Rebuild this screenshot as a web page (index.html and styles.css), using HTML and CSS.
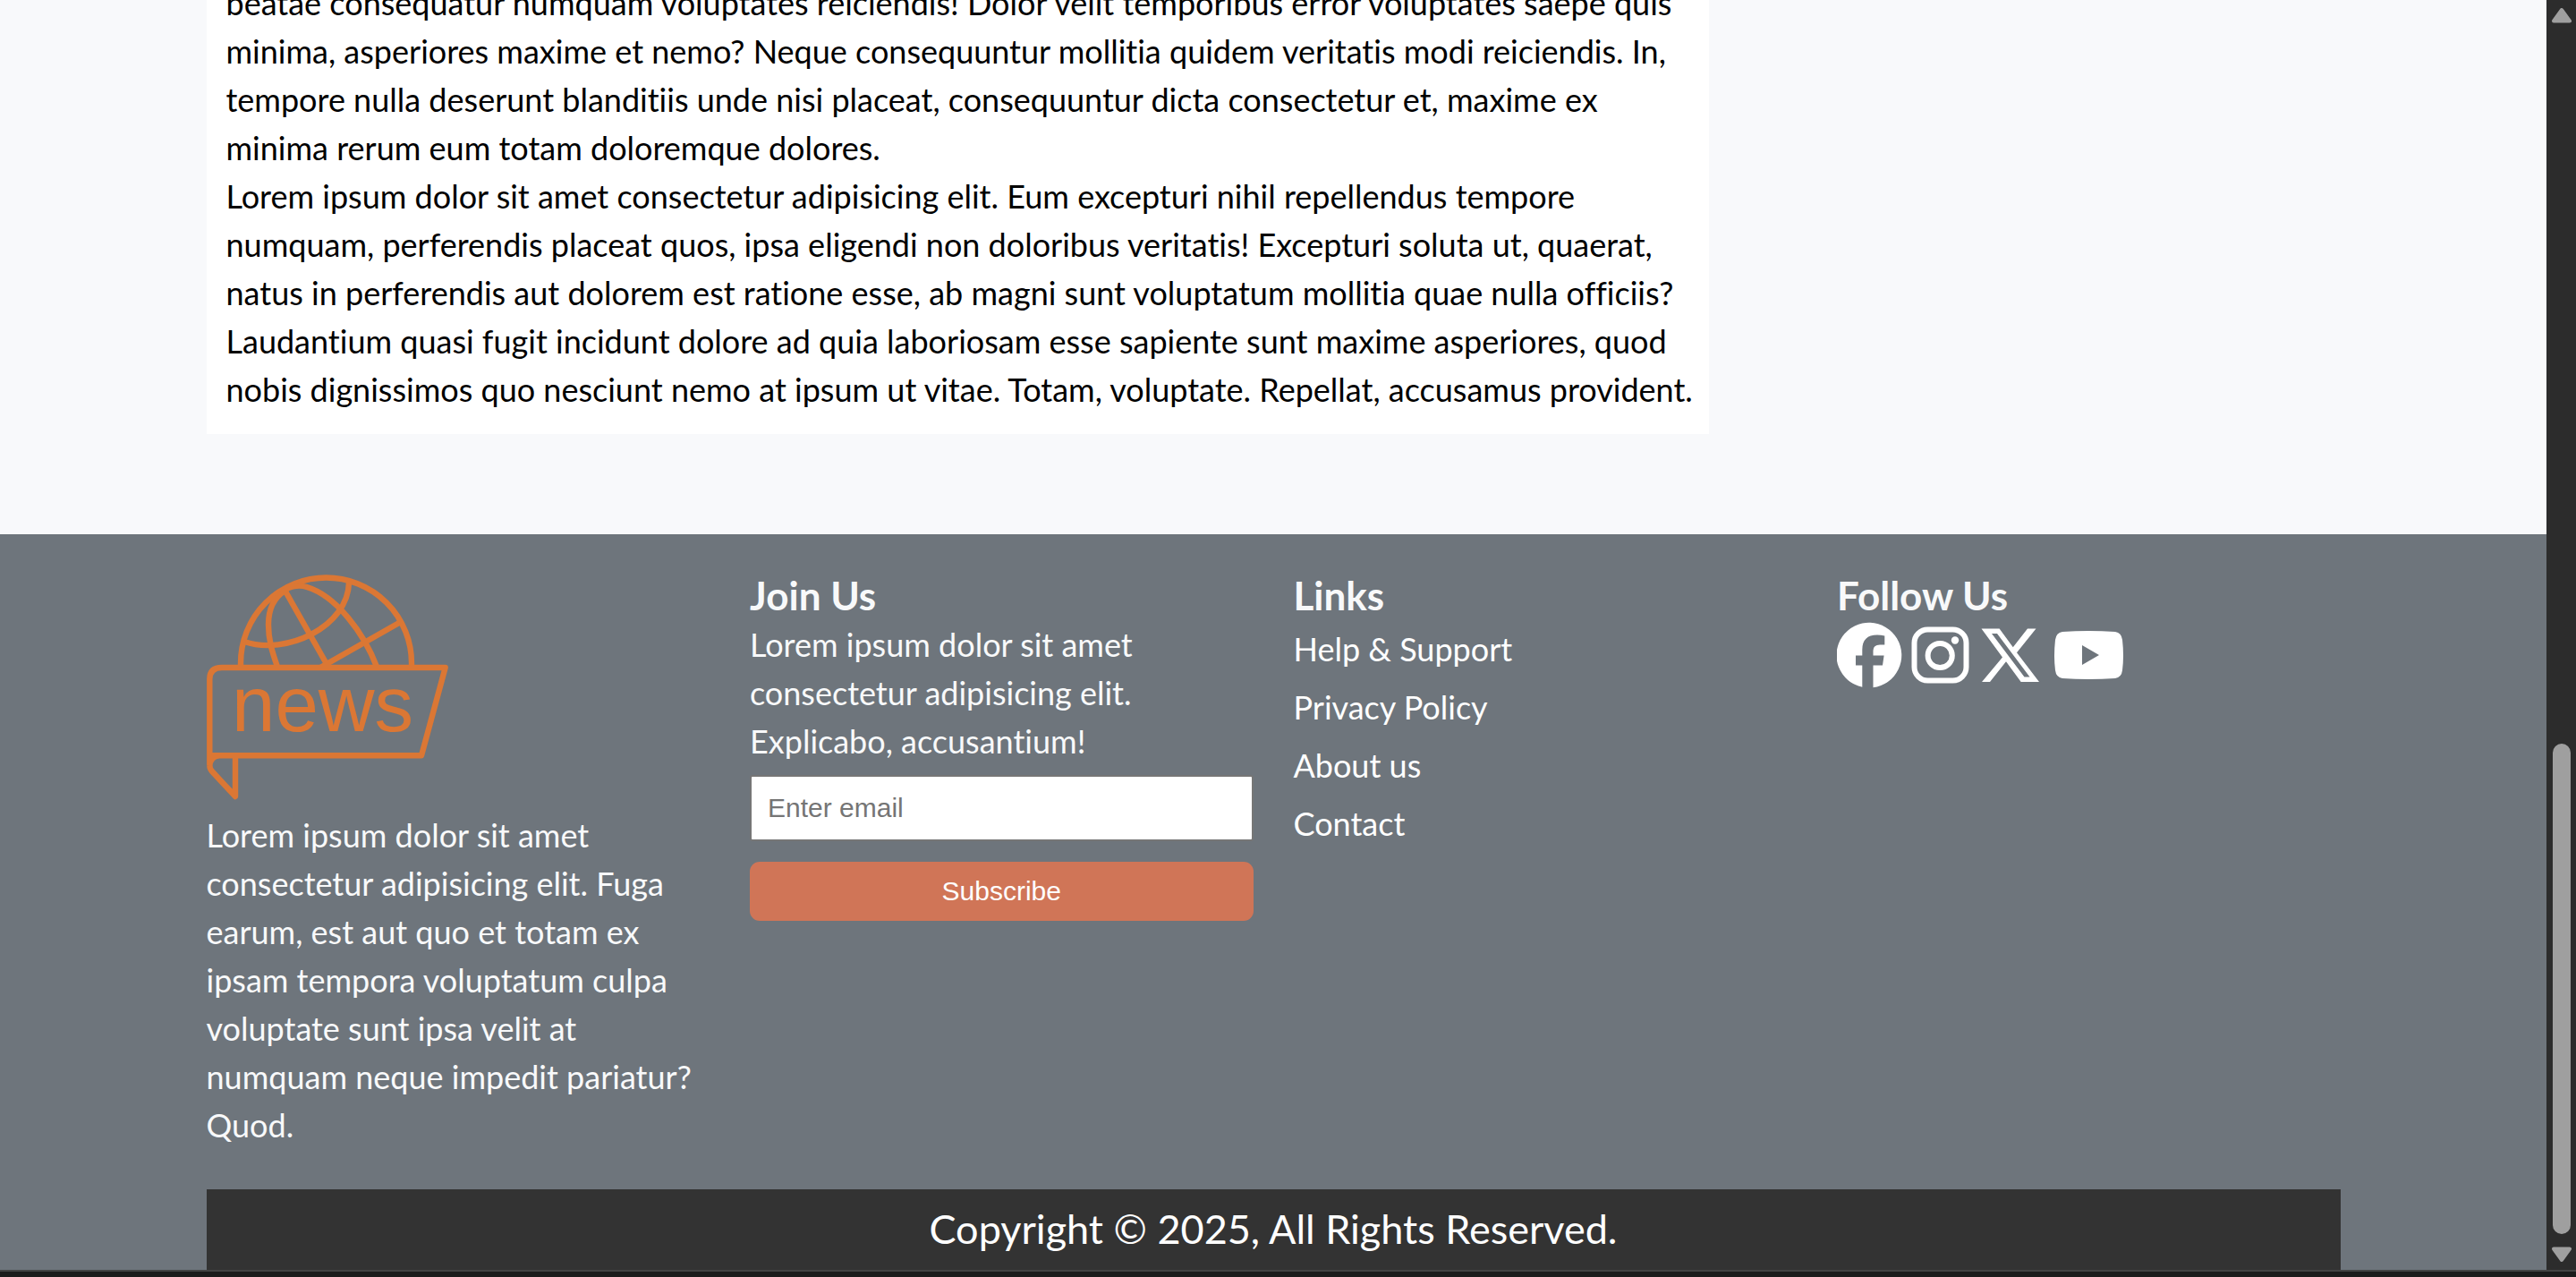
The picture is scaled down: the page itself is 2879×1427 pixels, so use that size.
FILE: index.html
```html
<!DOCTYPE html>
<html lang="en">
<head>
<meta charset="utf-8">
<meta name="viewport" content="width=device-width, initial-scale=1">
<title>News</title>
<link rel="stylesheet" href="styles.css">
</head>
<body>
<div class="window">
  <div class="page">
    <main class="container">
      <article class="card">
        <p>beatae consequatur numquam voluptates reiciendis! Dolor velit temporibus error voluptates saepe quis minima, asperiores maxime et nemo? Neque consequuntur mollitia quidem veritatis modi reiciendis. In, tempore nulla deserunt blanditiis unde nisi placeat, consequuntur dicta consectetur et, maxime ex minima rerum eum totam doloremque dolores.</p>
        <p>Lorem ipsum dolor sit amet consectetur adipisicing elit. Eum excepturi nihil repellendus tempore numquam, perferendis placeat quos, ipsa eligendi non doloribus veritatis! Excepturi soluta ut, quaerat, natus in perferendis aut dolorem est ratione esse, ab magni sunt voluptatum mollitia quae nulla officiis? Laudantium quasi fugit incidunt dolore ad quia laboriosam esse sapiente sunt maxime asperiores, quod nobis dignissimos quo nesciunt nemo at ipsum ut vitae. Totam, voluptate. Repellat, accusamus provident.</p>
      </article>
    </main>
    <footer class="footer">
      <div class="container columns">
        <section>
          <svg class="logo" viewBox="0 0 270 252" role="img" aria-label="News">
            <g fill="none" stroke="#db7734" stroke-width="6.4" stroke-linejoin="round">
              <path d="M38 103V99A95.4 95.4 0 0 1 229 99V103"/>
              <path d="M87 17L134 100M127 104L215 54"/>
              <path d="M42 75C89 91 158 58 159 9"/>
              <path d="M88 18C76 25 69 36 69 56C69 73 73 86 79 103"/>
              <path d="M86 19C92 13 103 11 112 14C145 24 176 66 190 103"/>
              <path d="M3.300 202.300V117Q3.300 104 17 104H266.700L240 202.300H3.300V213Q3.300 217 6 220L32 248V202.300M3.300 214Q4 203 14 202.300"/>
            </g>
            <text class="logo-text" x="28" y="175">news</text>
          </svg>
          <p>Lorem ipsum dolor sit amet consectetur adipisicing elit. Fuga earum, est aut quo et totam ex ipsam tempora voluptatum culpa voluptate sunt ipsa velit at numquam neque impedit pariatur? Quod.</p>
        </section>
        <section>
          <h3>Join Us</h3>
          <p>Lorem ipsum dolor sit amet consectetur adipisicing elit. Explicabo, accusantium!</p>
          <form class="join">
            <input type="email" placeholder="Enter email" aria-label="Enter email">
            <button type="button">Subscribe</button>
          </form>
        </section>
        <section>
          <h3>Links</h3>
          <ul class="links">
            <li><a href="#">Help &amp; Support</a></li>
            <li><a href="#">Privacy Policy</a></li>
            <li><a href="#">About us</a></li>
            <li><a href="#">Contact</a></li>
          </ul>
        </section>
        <section>
          <h3>Follow Us</h3>
          <div class="social">
            <a href="#" aria-label="Facebook"><svg width="76" height="79" viewBox="0 0 76 79"><path d="M28.300 74.800A36.400 36.400 0 1 1 40.500 75.300V50.500H51L52.600 39.500H40.500V34Q40.500 27.500 48 27.500H53.300V17.500Q49 16.500 45 16.500Q28.300 16.500 28.300 33V39.500H21V50.500H28.300Z"/></svg></a>
            <a href="#" aria-label="Instagram"><svg width="79" height="79" viewBox="0 0 79 79"><g fill="none" stroke="#fff" stroke-width="6"><rect x="10.500" y="10.500" width="58" height="57" rx="15"/><circle cx="39.200" cy="39.500" r="13.600"/></g><circle cx="56" cy="22.500" r="4.200"/></svg></a>
            <a href="#" aria-label="X"><svg width="79" height="79" viewBox="0 0 79 79"><path fill-rule="evenodd" d="M6.500 9.500H26.600L41.800 30.300L58 9.500H67.500L46 36.200L71 69H50.700L34 46.200L16 69H7L30 41.500ZM18 15L54.500 63.500H60.500L24 15Z"/></svg></a>
            <a href="#" aria-label="YouTube"><svg width="94" height="79" viewBox="0 0 94 79"><path fill-rule="evenodd" d="M18 13Q47 11 77 13Q84 14 85 22Q87 40 85 56Q84 64 77 65Q47 67 18 65Q11 64 10 56Q8 40 10 22Q11 14 18 13ZM40 28V50L59 39Z"/></svg></a>
          </div>
        </section>
      </div>
      <div class="container copyright">Copyright © 2025, All Rights Reserved.</div>
    </footer>
  </div>
  <div class="scrollbar" aria-hidden="true">
    <svg width="22" height="17" viewBox="0 0 22 17"><path d="M11 2L20 14.500H2Z"/></svg>
    <div class="track"><div class="thumb"></div></div>
    <svg width="22" height="17" viewBox="0 0 22 17"><path d="M11 15L20 2.500H2Z"/></svg>
  </div>
</div>
<div class="edge"></div>
</body>
</html>
```
FILE: styles.css
```css
* {
  box-sizing: border-box;
  margin: 0;
  padding: 0;
}

body {
  display: flex;
  flex-direction: column;
  height: 100vh;
  overflow: hidden;
  font-family: Lato, sans-serif;
  font-size: 36px;
  font-variant-ligatures: none;
  line-height: 54px;
  color: #000;
  background: #f8f9fb;
}

.window {
  display: flex;
  flex: 1;
  min-height: 0;
}

/* The page is scrolled to its end, so content hangs from the bottom edge. */
.page {
  display: flex;
  flex: 1;
  flex-direction: column;
  justify-content: flex-end;
  min-width: 0;
  overflow: hidden;
}

.container {
  width: 100%;
  max-width: 2385px;
  margin: 0 auto;
}

main.container {
  padding-bottom: 112px;
}

.card {
  width: 70.4%;
  padding: 22px 10px 23px 22px;
  background: #fff;
}

.footer {
  flex-shrink: 0;
  padding-top: 45px;
  color: #f8f9fa;
  background: #6e757c;
}

.columns {
  display: grid;
  grid-template-columns: repeat(4, 1fr);
  gap: 45px;
  padding-bottom: 45px;
}

.logo {
  display: block;
  width: 270px;
  height: 252px;
  margin-bottom: 12px;
}

.logo-text {
  font-family: "Liberation Sans", Arial, sans-serif;
  font-size: 87px;
  fill: #db7734;
}

h3 {
  padding-bottom: 4px;
  font-size: 44px;
  font-weight: 700;
  line-height: 47px;
}

.join {
  display: flex;
  flex-direction: column;
  gap: 23px;
  margin-top: 11px;
}

.join input,
.join button {
  width: 100%;
  font-family: "Liberation Sans", Arial, sans-serif;
  font-size: 30px;
}

.join input {
  height: 74px;
  padding: 0 18px;
  border: 2px solid #767676;
  border-radius: 3px;
  background: #fff;
}

.join input::placeholder {
  color: #757575;
}

.join button {
  height: 66px;
  border: 0;
  border-radius: 11px;
  color: #fff;
  background: #d07557;
}

.links {
  display: grid;
  gap: 11px;
  padding-top: 5px;
  list-style: none;
}

.links a {
  color: #fff;
  text-decoration: none;
}

.social {
  display: flex;
}

.social svg {
  display: block;
  fill: #fff;
}

.copyright {
  padding: 17px 18px 19px;
  font-size: 45px;
  text-align: center;
  color: #fff;
  background: #333;
}

.scrollbar {
  display: flex;
  flex-direction: column;
  align-items: center;
  width: 33px;
  padding: 9px 0;
  background: #2c2c2c;
}

.scrollbar svg {
  fill: #9f9f9f;
  stroke: #9f9f9f;
  stroke-width: 4px;
  stroke-linejoin: round;
}

.track {
  display: flex;
  flex: 1;
  flex-direction: column;
  justify-content: flex-end;
  width: 20px;
  padding-bottom: 14px;
}

.thumb {
  height: 40.5%;
  border-radius: 10px;
  background: #9f9f9f;
}

.edge {
  height: 8px;
  border-top: 2px solid #444;
  background: #1c1c1c;
}
```
